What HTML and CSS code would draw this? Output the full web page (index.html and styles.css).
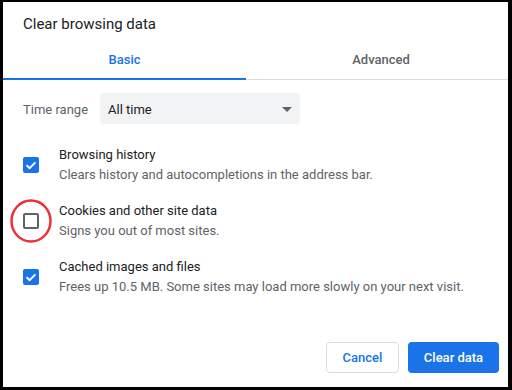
FILE: index.html
```html
<!DOCTYPE html>
<html>
<head>
<meta charset="utf-8">
<link rel="stylesheet" href="styles.css">
</head>
<body>
<div class="dialog">
  <div class="title">Clear browsing data</div>
  <div class="tabs">
    <div class="tab tab-active">Basic</div>
    <div class="tab tab-other">Advanced</div>
  </div>
  <div class="range">
    <span class="range-label">Time range</span>
    <div class="select">
      <span>All time</span>
      <svg class="arrow" width="10" height="5" viewBox="0 0 10 5"><path d="M0 0h10L5 5z" fill="#5f6368"/></svg>
    </div>
  </div>
  <div class="options">
    <div class="option">
      <div class="box box-checked">
        <svg width="16" height="16" viewBox="0 0 16 16"><path d="M3.6 8.2l3 3 5.8-5.8" fill="none" stroke="#fff" stroke-width="2"/></svg>
      </div>
      <div class="texts">
        <div class="opt-title">Browsing history</div>
        <div class="opt-sub">Clears history and autocompletions in the address bar.</div>
      </div>
    </div>
    <div class="option">
      <div class="box box-empty"></div>
      <svg class="ring" width="42" height="44" viewBox="0 0 42 44"><ellipse cx="21" cy="22" rx="19.5" ry="20.5" fill="none" stroke="#ee3035" stroke-width="2.5"/></svg>
      <div class="texts">
        <div class="opt-title">Cookies and other site data</div>
        <div class="opt-sub">Signs you out of most sites.</div>
      </div>
    </div>
    <div class="option">
      <div class="box box-checked">
        <svg width="16" height="16" viewBox="0 0 16 16"><path d="M3.6 8.2l3 3 5.8-5.8" fill="none" stroke="#fff" stroke-width="2"/></svg>
      </div>
      <div class="texts">
        <div class="opt-title">Cached images and files</div>
        <div class="opt-sub">Frees up 10.5 MB. Some sites may load more slowly on your next visit.</div>
      </div>
    </div>
  </div>
  <div class="footer">
    <button class="btn btn-cancel">Cancel</button>
    <button class="btn btn-primary">Clear data</button>
  </div>
</div>
</body>
</html>
```
FILE: styles.css
```css
html, body {
  margin: 0;
  padding: 0;
  background: #000;
}
body {
  padding: 2px 4px 3px 3px;
  font-family: Roboto, "Liberation Sans", sans-serif;
}
.dialog {
  background: #fff;
  height: 385px;
  display: flex;
  flex-direction: column;
  box-sizing: border-box;
}
.title {
  padding: 12px 20px 0 20px;
  font-size: 15px;
  line-height: 20px;
  color: #202124;
}
.tabs {
  margin-top: 4px;
  height: 42px;
  display: flex;
  border-bottom: 1px solid #dadce0;
  box-sizing: border-box;
}
.tab {
  display: flex;
  align-items: center;
  justify-content: center;
  font-size: 13px;
  font-weight: 500;
  box-sizing: border-box;
}
.tab-active {
  width: 243px;
  color: #1a73e8;
  border-bottom: 2px solid #1a73e8;
  margin-bottom: -1px;
  padding-top: 3px;
}
.tab-other {
  flex: 1;
  color: #5f6368;
  padding-left: 8px;
  padding-top: 1px;
}
.range {
  margin-top: 13px;
  padding-left: 20px;
  display: flex;
  align-items: center;
}
.range-label {
  width: 77px;
  font-size: 13px;
  color: #5f6368;
  padding-top: 1px;
}
.select {
  width: 200px;
  height: 31px;
  background: #f1f3f4;
  border-radius: 4px;
  display: flex;
  align-items: center;
  justify-content: space-between;
  padding: 1px 8px 0 8px;
  box-sizing: border-box;
  font-size: 13px;
  color: #202124;
}
.options {
  margin-top: 21px;
  display: flex;
  flex-direction: column;
  gap: 16px;
  padding-left: 20px;
}
.option {
  position: relative;
  display: flex;
  align-items: center;
  gap: 20px;
  height: 40px;
}
.box {
  width: 16px;
  height: 16px;
  border-radius: 2px;
  box-sizing: border-box;
  flex: none;
}
.box svg {
  display: block;
}
.box-checked {
  background: #1a73e8;
}
.box-empty {
  border: 2px solid #5f6368;
}
.ring {
  position: absolute;
  left: -13px;
  top: -2px;
}
.opt-title {
  font-size: 13px;
  line-height: 20px;
  color: #202124;
}
.opt-sub {
  font-size: 13px;
  line-height: 20px;
  color: #5f6368;
}
.footer {
  margin-top: auto;
  display: flex;
  justify-content: flex-end;
  gap: 9px;
  padding: 0 9px 14px 0;
}
.btn {
  height: 31px;
  border-radius: 4px;
  font-family: Roboto, "Liberation Sans", sans-serif;
  font-size: 13px;
  font-weight: 500;
  box-sizing: border-box;
  padding: 0;
}
.btn-cancel {
  width: 73px;
  background: #fff;
  color: #1a73e8;
  border: 1px solid #dadce0;
}
.btn-primary {
  width: 91px;
  background: #1a73e8;
  color: #fff;
  border: none;
}
```
